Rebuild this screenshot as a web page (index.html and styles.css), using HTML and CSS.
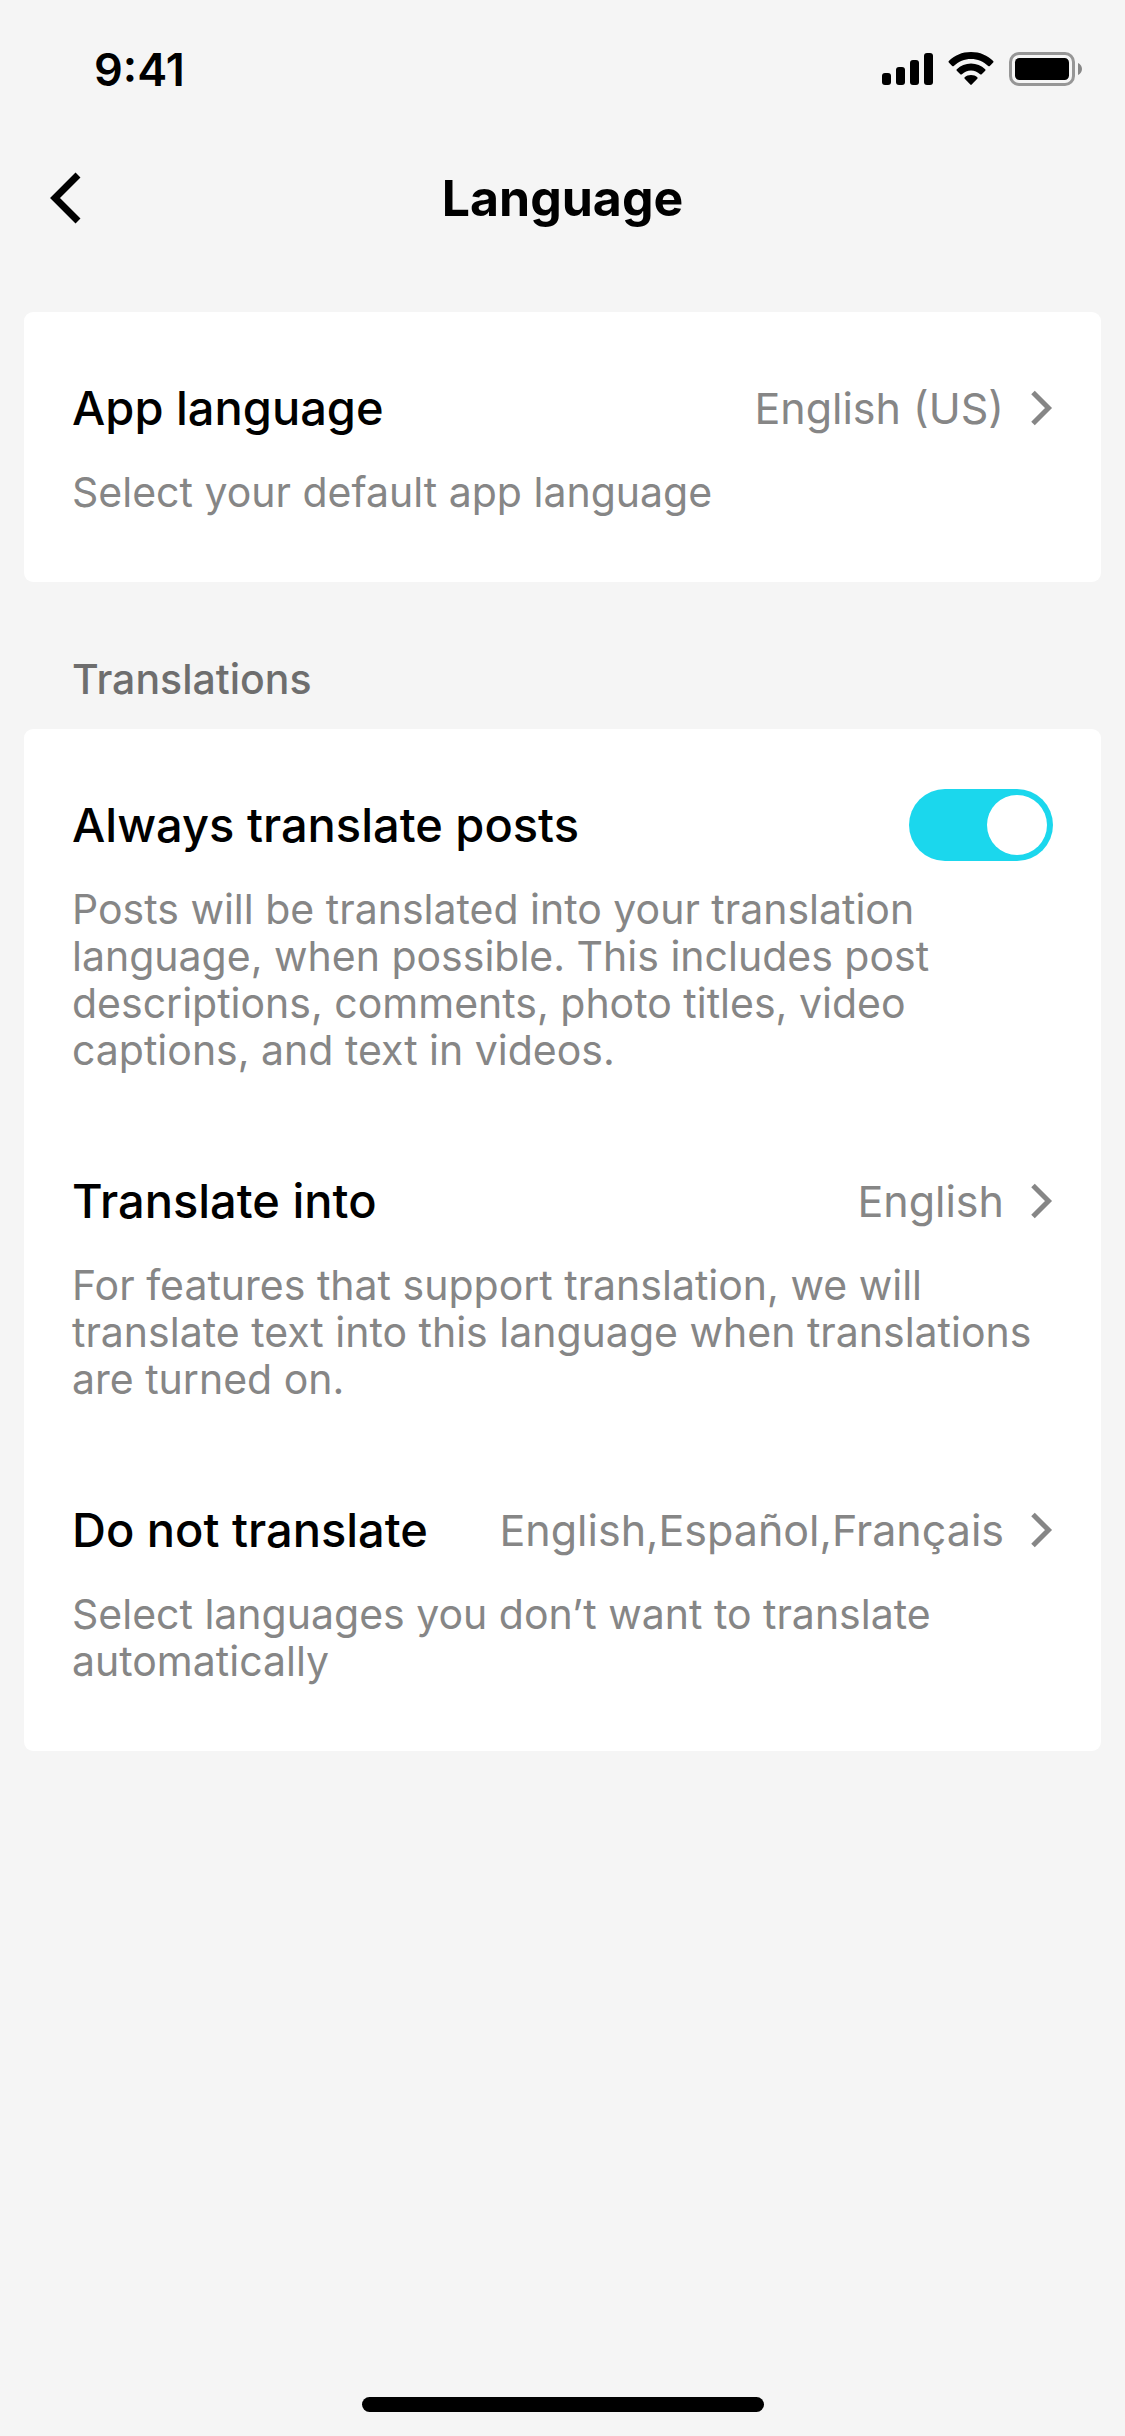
FILE: index.html
```
<!DOCTYPE html>
<html lang="en">
<head>
  <meta charset="UTF-8" />
  <meta name="viewport" content="width=device-width, initial-scale=1" />
  <title>Language</title>
  <link rel="stylesheet" href="styles.css">
</head>
<body>

  <div class="status-bar">
    <span class="time">9:41</span>
    <div class="status-icons">
      <svg width="51" height="34" viewBox="0 0 51 34" aria-hidden="true">
        <rect x="0" y="21" width="9" height="12" rx="3" />
        <rect x="14" y="15" width="9" height="18" rx="3" />
        <rect x="28" y="8" width="9" height="25" rx="3" />
        <rect x="42" y="1" width="9" height="32" rx="3" />
      </svg>
      <svg width="46" height="34" viewBox="0 0 46 34" aria-hidden="true">
        <path d="M23 0C32 0 39.500 3.400 45.200 9Q45.900 9.800 45.200 10.600L41.800 14Q41 14.700 40.200 14C35.500 9.500 29.500 7 23 7S10.500 9.500 5.800 14Q5 14.700 4.200 14L.8 10.600Q.1 9.800 .8 9C6.500 3.400 14 0 23 0Z" />
        <path d="M23 11.500C28.500 11.500 33.300 13.700 37.200 17.200Q38 18 37.200 18.800L33.700 22.200Q32.900 22.900 32.100 22.200C29.500 19.900 26.500 18.500 23 18.500S16.500 19.900 13.900 22.200Q13.100 22.900 12.300 22.200L8.800 18.800Q8 18 8.800 17.200C12.700 13.700 17.500 11.500 23 11.500Z" />
        <path d="M23 23C25.500 23 27.700 23.900 29.300 25.300Q30 26 29.300 26.800L23.700 32.600Q23 33.200 22.300 32.600L16.700 26.800Q16 26 16.700 25.300C18.300 23.900 20.500 23 23 23Z" />
      </svg>
      <svg width="73" height="34" viewBox="0 0 73 34" aria-hidden="true">
        <rect x="1.500" y="1.500" width="63" height="31" rx="8.500" fill="none" stroke="#969696" stroke-width="3" />
        <rect x="6" y="6" width="54" height="22" rx="4.500" />
        <path d="M69 11C71.500 12.200 73 14.400 73 17S71.500 21.800 69 23Z" fill="#878787" />
      </svg>
    </div>
  </div>

  <header class="header">
    <button class="back" aria-label="Back">
      <svg width="31" height="52" viewBox="0 0 31 52" aria-hidden="true">
        <path d="M28 3L5 26L28 49" />
      </svg>
    </button>
    <h1>Language</h1>
  </header>

  <main>
    <section class="card">
      <button class="row">
        <span class="row-head">
          <span class="title">App language</span>
          <span class="value">English (US)</span>
          <svg class="chevron" width="24" height="40" viewBox="0 0 24 40" aria-hidden="true"><path d="M4 4.500L19.500 20L4 35.500" /></svg>
        </span>
        <span class="desc">Select your default app language</span>
      </button>
    </section>

    <h2>Translations</h2>

    <section class="card">
      <label class="row">
        <span class="row-head">
          <span class="title">Always translate posts</span>
          <input class="switch" type="checkbox" role="switch" checked>
        </span>
        <span class="desc">Posts will be translated into your translation language, when possible. This includes post descriptions, comments, photo titles, video captions, and text in videos.</span>
      </label>

      <button class="row">
        <span class="row-head">
          <span class="title">Translate into</span>
          <span class="value">English</span>
          <svg class="chevron" width="24" height="40" viewBox="0 0 24 40" aria-hidden="true"><path d="M4 4.500L19.500 20L4 35.500" /></svg>
        </span>
        <span class="desc">For features that support translation, we will translate text into this language when translations are turned on.</span>
      </button>

      <button class="row">
        <span class="row-head">
          <span class="title">Do not translate</span>
          <span class="value">English,Español,Français</span>
          <svg class="chevron" width="24" height="40" viewBox="0 0 24 40" aria-hidden="true"><path d="M4 4.500L19.500 20L4 35.500" /></svg>
        </span>
        <span class="desc">Select languages you don’t want to translate automatically</span>
      </button>
    </section>
  </main>

  <div class="home-indicator"></div>

</body>
</html>
```
FILE: styles.css
```
* {
  box-sizing: border-box;
}

body {
  display: flex;
  flex-direction: column;
  min-height: 100vh;
  margin: 0;
  background: #f5f5f5;
  color: #000;
  font-family: Inter, "Liberation Sans", sans-serif;
}

button {
  padding: 0;
  border: none;
  background: none;
  color: inherit;
  font: inherit;
  text-align: left;
  cursor: pointer;
}

svg {
  display: block;
  flex: none;
}

.status-bar {
  display: flex;
  align-items: center;
  justify-content: space-between;
  height: 138px;
  padding: 0 43px 0 94px;
}

.time {
  font-size: 45px;
  font-weight: 600;
}

.status-icons {
  display: flex;
  gap: 15px;
}

.header {
  display: grid;
  grid-template-columns: 1fr auto 1fr;
  align-items: center;
  height: 120px;
  padding: 0 50px;
}

.back {
  justify-self: start;
}

.back path {
  fill: none;
  stroke: #000;
  stroke-width: 7;
}

h1 {
  margin: 0;
  font-size: 50px;
  font-weight: 700;
  line-height: 56px;
}

main {
  flex: 1;
  padding: 54px 24px;
}

h2 {
  margin: 72px 48px 25px;
  color: #6e6e6e;
  font-size: 41px;
  font-weight: 500;
  line-height: 50px;
}

.card {
  display: flex;
  flex-direction: column;
  gap: 91px;
  padding: 60px 48px 66px;
  background: #fff;
  border-radius: 9px;
}

.row {
  display: flex;
  flex-direction: column;
  align-items: stretch;
  gap: 25px;
}

.row-head {
  display: flex;
  align-items: center;
  height: 72px;
}

.title {
  flex: 1;
  font-size: 47px;
  font-weight: 500;
  line-height: 56px;
}

.value {
  margin-right: 25px;
  color: #868686;
  font-size: 43px;
  line-height: 56px;
}

.chevron path {
  fill: none;
  stroke: #868686;
  stroke-width: 5;
}

.desc {
  color: #868686;
  font-size: 41px;
  line-height: 47px;
}

.switch {
  display: flex;
  justify-content: flex-start;
  appearance: none;
  width: 144px;
  height: 72px;
  margin: 0;
  padding: 6px;
  border-radius: 36px;
  background: #d0d0d0;
  cursor: pointer;
}

.switch::before {
  content: "";
  width: 60px;
  height: 60px;
  border-radius: 50%;
  background: #fff;
}

.switch:checked {
  justify-content: flex-end;
  background: #1bd7ed;
}

.home-indicator {
  width: 402px;
  height: 15px;
  margin: 0 auto 24px;
  border-radius: 8px;
  background: #000;
}
```
